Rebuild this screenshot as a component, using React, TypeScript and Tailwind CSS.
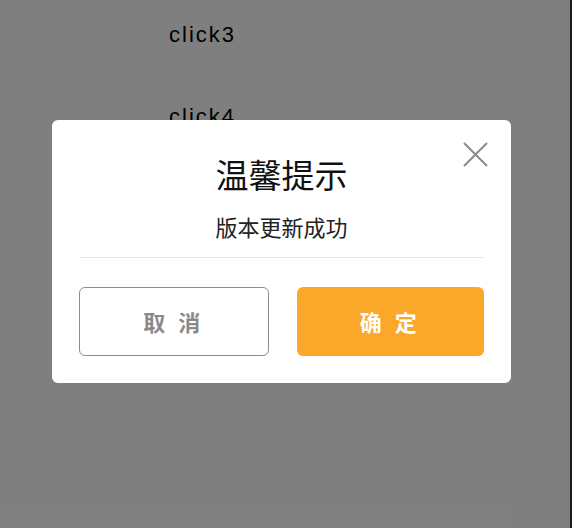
const items = ['click3', 'click4'];

export default function App() {
  return (
    <div className="relative flex h-[528px] w-[572px] overflow-hidden bg-white font-['Noto_Sans_CJK_SC',sans-serif]">
      {/* page behind the dialog */}
      <div className="flex flex-1 flex-col gap-[60px] pl-[169px] pt-[24px]">
        {items.map((item) => (
          <p
            key={item}
            className="font-['Liberation_Sans',sans-serif] text-[22px] leading-[22px] tracking-[2px] text-black"
          >
            {item}
          </p>
        ))}
      </div>
      <div className="w-[2px] bg-[#1c1c1c]" />

      {/* overlay + dialog */}
      <div className="absolute inset-y-0 left-0 right-[2px] bg-black/50 pl-[52px] pt-[120px]">
        <div className="relative flex w-[459px] flex-col items-center rounded-[6px] bg-white pl-[27px] pr-[27px] pb-[27px] pt-[37px]">
          <button className="absolute right-[23px] top-[22px] text-[#8a8a8a]">
            <svg width="25" height="25" viewBox="0 0 25 25" fill="none" stroke="currentColor" strokeWidth="2">
              <path d="M1 1L24 24M24 1L1 24" />
            </svg>
          </button>
          <h2 className="text-[33px] leading-[34px] text-[#111]">温馨提示</h2>
          <p className="mt-[21px] text-[22px] leading-[28px] text-[#222]">版本更新成功</p>
          <div className="mt-[17px] h-px w-full bg-[#e6e6e6]" />
          <div className="mt-[29px] flex w-full gap-[28px]">
            <button className="flex h-[69px] flex-1 items-center justify-center rounded-[6px] border-[1.5px] border-[#8c8c8c] text-[22px] font-bold tracking-[4px] text-[#8a8a8a]">
              取 消
            </button>
            <button className="flex h-[69px] flex-1 items-center justify-center rounded-[6px] bg-[#fba72a] text-[22px] font-bold tracking-[4px] text-white">
              确 定
            </button>
          </div>
        </div>
      </div>
    </div>
  );
}
